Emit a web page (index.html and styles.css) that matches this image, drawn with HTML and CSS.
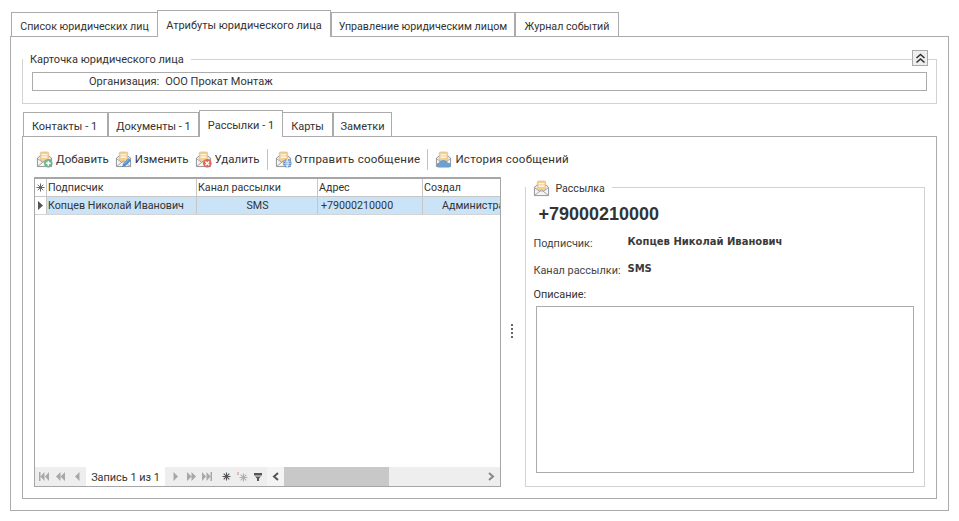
FILE: index.html
```html
<!DOCTYPE html>
<html lang="ru">
<head>
<meta charset="utf-8">
<title>Атрибуты юридического лица</title>
<link rel="stylesheet" href="styles.css">
</head>
<body>
<svg class="defs" width="0" height="0" aria-hidden="true">
  <defs>
    <symbol id="env" viewBox="0 0 18 18">
      <path d="M1.5 7.5 L9 2 L16.5 7.5 V16.5 H1.5 Z" fill="#f4f4f4" stroke="#8f8f8f"/>
      <path d="M4.5 9.5 V2.5 Q4.5 1 6 1 H12 Q13.5 1 13.5 2.5 V9.5 L9 12.5 Z" fill="#f5cf8e" stroke="#d9b987" stroke-width=".6"/>
      <path d="M6 4 H12 M6 6.5 H12" stroke="#fff" stroke-width="1.2"/>
      <path d="M1.5 8 L7 12 M16.5 8 L11 12 M1.5 16.5 L9 10.5 L16.5 16.5" fill="none" stroke="#a0a0a0"/>
    </symbol>
  </defs>
</svg>
<div class="app">
  <div class="tabs">
    <div class="tab t1">Список юридических лиц</div>
    <div class="tab active t2">Атрибуты юридического лица</div>
    <div class="tab t3">Управление юридическим лицом</div>
    <div class="tab t4">Журнал событий</div>
  </div>
  <div class="panel main">
    <div class="group card">
      <div class="legend">Карточка юридического лица</div>
      <button class="collapse" aria-label="Свернуть">
        <svg width="11" height="11" viewBox="0 0 11 11"><path d="M1.5 5 L5.5 1.5 L9.5 5 M1.5 9.5 L5.5 6 L9.5 9.5" fill="none" stroke="#333" stroke-width="1.6"/></svg>
      </button>
      <div class="field"><span class="field-label">Организация:</span><span>ООО Прокат Монтаж</span></div>
    </div>
    <div class="tabs inner">
      <div class="tab i1">Контакты - 1</div>
      <div class="tab i2">Документы - 1</div>
      <div class="tab active i3">Рассылки - 1</div>
      <div class="tab i4">Карты</div>
      <div class="tab i5">Заметки</div>
    </div>
    <div class="panel sub">
      <div class="toolbar">
        <div class="tool">
          <svg class="ico" viewBox="0 0 18 18"><use href="#env"/><circle cx="13" cy="13" r="4.5" fill="#6fb592"/><path d="M13 10.5 V15.5 M10.5 13 H15.5" stroke="#fff" stroke-width="1.6"/></svg>
          <span>Добавить</span>
        </div>
        <div class="tool">
          <svg class="ico" viewBox="0 0 18 18"><use href="#env"/><path d="M7.5 17 L8.5 13.5 L14.5 7.5 L17 10 L11 16 Z" fill="#4f8fd0"/><path d="M9.5 14 L14.8 8.7" stroke="#a9cdef" stroke-width=".7"/></svg>
          <span>Изменить</span>
        </div>
        <div class="tool">
          <svg class="ico" viewBox="0 0 18 18"><use href="#env"/><circle cx="13" cy="13" r="4.5" fill="#e0645c"/><path d="M11 11 L15 15 M15 11 L11 15" stroke="#fff" stroke-width="1.5"/></svg>
          <span>Удалить</span>
        </div>
        <div class="sep"></div>
        <div class="tool wide">
          <svg class="ico" viewBox="0 0 18 18"><use href="#env"/><circle cx="13" cy="13" r="4.5" fill="#5b8fcb"/><path d="M8.5 13 H17.5 M13 8.5 V17.5 M9.5 10.8 H16.5 M9.5 15.2 H16.5 M13 8.5 Q10 13 13 17.5 M13 8.5 Q16 13 13 17.5" fill="none" stroke="#fff" stroke-width=".6"/></svg>
          <span>Отправить сообщение</span>
        </div>
        <div class="sep"></div>
        <div class="tool wide">
          <svg class="ico" viewBox="0 0 18 18"><use href="#env"/><path d="M4 17.5 Q1.5 17.5 1.5 15 Q1.5 12.8 4 12.5 Q5 9.5 9 9.5 Q12.5 9.5 13.5 12.5 Q17 12.5 17 15 Q17 17.5 14.5 17.5 Z" fill="#6f9fd0"/></svg>
          <span>История сообщений</span>
        </div>
      </div>
      <div class="content">
        <div class="gridbox">
          <div class="row head">
            <div class="cell mark"><svg width="9" height="9" viewBox="0 0 9 9"><path d="M4.5 .5 V8.5 M.5 4.5 H8.5 M1.7 1.7 L7.3 7.3 M7.3 1.7 L1.7 7.3" stroke="#666"/></svg></div>
            <div class="cell c1">Подписчик</div>
            <div class="cell c2">Канал рассылки</div>
            <div class="cell c3">Адрес</div>
            <div class="cell c4">Создал</div>
          </div>
          <div class="row sel">
            <div class="cell mark"><svg width="5" height="9" viewBox="0 0 5 9"><path d="M0 0 L5 4.5 L0 9 Z" fill="#555"/></svg></div>
            <div class="cell c1">Копцев Николай Иванович</div>
            <div class="cell c2 center">SMS</div>
            <div class="cell c3 phone-cell">+79000210000</div>
            <div class="cell c4 ind">Администратор</div>
          </div>
          <div class="grid-body"></div>
          <div class="nav">
            <div class="navbtn"><svg width="10" height="9" viewBox="0 0 10 9"><path d="M0 0 H1.5 V9 H0 Z M5.5 0 V9 L1.5 4.5 Z M10 0 V9 L6 4.5 Z" fill="#a8a8a8"/></svg></div>
            <div class="navbtn"><svg width="9" height="9" viewBox="0 0 9 9"><path d="M4.5 0 V9 L0 4.5 Z M9 0 V9 L4.5 4.5 Z" fill="#a8a8a8"/></svg></div>
            <div class="navbtn"><svg width="5" height="9" viewBox="0 0 5 9"><path d="M4.5 0 V9 L0 4.5 Z" fill="#a8a8a8"/></svg></div>
            <div class="rec">Запись 1 из 1</div>
            <div class="navright">
              <div class="navbtn n"><svg width="5" height="9" viewBox="0 0 5 9"><path d="M.5 0 V9 L5 4.5 Z" fill="#a8a8a8"/></svg></div>
              <div class="navbtn n"><svg width="9" height="9" viewBox="0 0 9 9"><path d="M0 0 V9 L4.5 4.5 Z M4.5 0 V9 L9 4.5 Z" fill="#a8a8a8"/></svg></div>
              <div class="navbtn n"><svg width="10" height="9" viewBox="0 0 10 9"><path d="M0 0 V9 L4 4.5 Z M4.5 0 V9 L8.5 4.5 Z M8.5 0 H10 V9 H8.5 Z" fill="#a8a8a8"/></svg></div>
              <div class="navbtn n gap"><svg width="9" height="9" viewBox="0 0 9 9"><path d="M4.5 .5 V8.5 M.5 4.5 H8.5 M1.7 1.7 L7.3 7.3 M7.3 1.7 L1.7 7.3" stroke="#555" stroke-width="1.1"/></svg></div>
              <div class="navbtn n"><svg width="11" height="10" viewBox="0 0 11 10"><path d="M6.5 1.5 V9.5 M2.5 5.5 H10.5 M3.7 2.7 L9.3 8.3 M9.3 2.7 L3.7 8.3" stroke="#b0b0b0" stroke-width="1.1"/><path d="M1 0 V3" stroke="#d99a8e" stroke-width="1.2"/></svg></div>
              <div class="navbtn n"><svg width="8" height="8" viewBox="0 0 8 8"><path d="M0 0 H8 V2.5 H0 Z M1 3.5 H7 L5 5.5 V8 H3 V5.5 Z" fill="#555"/></svg></div>
            </div>
            <div class="sb-btn"><svg width="8" height="9" viewBox="0 0 8 9"><path d="M6 1 L2 4.5 L6 8" fill="none" stroke="#555" stroke-width="2"/></svg></div>
            <div class="sb-thumb"></div>
            <div class="sb-track"><svg width="8" height="9" viewBox="0 0 8 9"><path d="M2 1 L6 4.5 L2 8" fill="none" stroke="#888" stroke-width="2"/></svg></div>
          </div>
        </div>
        <div class="splitter"><i></i><i></i><i></i><i></i></div>
        <div class="group detail">
          <div class="legend with-icon">
            <svg class="ico" viewBox="0 0 18 18"><use href="#env"/></svg>
            <span>Рассылка</span>
          </div>
          <div class="phone">+79000210000</div>
          <div class="kv k1"><span class="key">Подписчик:</span><b>Копцев Николай Иванович</b></div>
          <div class="kv k2"><span class="key">Канал рассылки:</span><b>SMS</b></div>
          <div class="desc-label">Описание:</div>
          <div class="textarea"></div>
        </div>
      </div>
    </div>
  </div>
</div>
</body>
</html>
```

FILE: styles.css
```css
* { box-sizing: border-box; }
html, body { margin: 0; height: 100%; background: #fff; }
body {
  font-family: Roboto, "Noto Sans", sans-serif;
  font-size: 10.9px;
  color: #333;
  overflow: hidden;
}
.defs { position: absolute; }
.app { padding: 10px 0 0 10px; width: 949px; }

.tabs { display: flex; align-items: flex-end; height: 26px; padding-left: 1px; }
.tab {
  height: 24px;
  border: 1px solid #ababab;
  border-bottom: 0;
  background: #fff;
  display: flex;
  align-items: center;
  justify-content: center;
  white-space: nowrap;
  padding-top: 4px;
  font-size: 10.7px;
}
.tab.active { height: 27px; margin-bottom: -1px; position: relative; z-index: 1; padding-top: 3px; }
.t1 { width: 147px; }
.tab.t2 { width: 174px; margin-left: -1px; font-size: 11px; }
.t3 { width: 184px; }
.t4 { width: 104px; }

.panel { border: 1px solid #ababab; background: #fff; }
.main { height: 475px; padding: 22px 11px 11px; }

.group { border: 1px solid #d2d2d2; position: relative; }
.legend {
  width: fit-content;
  background: #fff;
  padding: 0 7px;
  margin: -8px 0 0 0;
  height: 15px;
  line-height: 15px;
  font-size: 11px;
}
.card { height: 45px; margin-bottom: 6px; }
.collapse {
  position: absolute;
  top: -10px;
  right: 8px;
  width: 16px;
  height: 16px;
  padding: 1px 0 0;
  border: 1px solid #ababab;
  background: #eee;
  display: flex;
  align-items: center;
  justify-content: center;
}
.field {
  margin: 5px 9px 0;
  height: 19px;
  border: 1px solid #ababab;
  display: flex;
  align-items: center;
  padding-left: 56px;
  font-size: 11px;
}
.field-label { margin-right: 6px; }

.inner { padding-left: 1px; }
.inner .tab { height: 24px; font-size: 11px; }
.inner .tab.active { height: 27px; }
.inner .i1 { width: 85px; padding-right: 2px; }
.i2 { width: 91px; }
.i3 { width: 84px; }
.i4 { width: 51px; margin-left: -1px; }
.i5 { width: 59px; }

.sub { height: 363px; padding: 11px 11px 0; }
.toolbar { display: flex; align-items: center; height: 22px; gap: 6px; padding-left: 2px; margin-bottom: 7px; }
.tool { display: flex; align-items: center; gap: 3px; white-space: nowrap; font-size: 11.5px; }
.tool.wide { letter-spacing: .25px; }
.ico { width: 17px; height: 17px; flex: none; display: block; }
.sep { width: 1px; height: 21px; margin: 0 1px; background: #c4c4c4; }

.content { display: flex; }
.gridbox {
  width: 468px;
  height: 310px;
  border: 1px solid #a6a6a6;
  border-top-width: 2px;
  display: flex;
  flex-direction: column;
  overflow: hidden;
}
.row { display: flex; flex: none; }
.head { height: 18px; border-bottom: 1px solid #c6c6c6; }
.sel { height: 18px; border-bottom: 1px solid #d4d4d4; }
.sel .cell { background: #cbe3f6; }
.cell {
  border-right: 1px solid #c6c6c6;
  padding-left: 1px;
  line-height: 17px;
  white-space: nowrap;
  overflow: hidden;
  flex: none;
  font-size: 10.7px;
}
.mark { width: 12px; padding: 0; display: flex; align-items: center; justify-content: center; background: #fff !important; }
.c1 { width: 150px; }
.c2 { width: 121px; }
.c3 { width: 105px; }
.c4 { width: 78px; border-right: 0; }
.center { text-align: center; }
.phone-cell { padding-left: 3px; }
.ind { padding-left: 19px; }
.grid-body { flex: 1; }

.nav { height: 19px; display: flex; align-items: center; background: #eee; flex: none; }
.navbtn { width: 17px; height: 19px; display: flex; align-items: center; justify-content: center; flex: none; }
.rec { width: 79px; height: 19px; background: #fff; line-height: 19px; padding-top: 1px; text-align: center; flex: none; }
.navright { display: flex; padding-left: 2px; width: 102px; flex: none; }
.navbtn.n { width: 16px; }
.navbtn.gap { margin-left: 3px; }
.sb-btn { width: 17px; height: 19px; background: #f4f4f4; display: flex; align-items: center; justify-content: center; flex: none; }
.sb-thumb { width: 105px; height: 19px; background: #c8c8c8; flex: none; }
.sb-track { flex: 1; height: 19px; display: flex; align-items: center; justify-content: flex-end; padding-right: 5px; }

.splitter { width: 24px; display: flex; flex-direction: column; align-items: center; justify-content: center; gap: 2px; height: 310px; padding: 0 2px 2px 0; }
.splitter i { width: 2px; height: 2px; background: #666; display: block; }

.detail { width: 400px; height: 300px; margin-top: 10px; }
.with-icon { display: flex; align-items: center; gap: 5px; margin: -8px 0 0 0; height: 17px; font-size: 10.6px; }
.phone { font-family: "Liberation Sans", sans-serif; font-weight: 700; font-size: 18px; line-height: 20px; margin: 7px 0 0 12px; color: #333; }
.kv { display: flex; margin-left: 7px; align-items: flex-start; }
.key { width: 94px; margin-top: 2px; line-height: 14px; color: #444; }
.kv b { font-family: "DejaVu Sans", sans-serif; font-size: 10px; line-height: 14px; color: #3a3a3a; }
.k1 { margin-top: 11px; height: 27px; }
.k2 { height: 25px; }
.desc-label { margin: 0 0 0 7px; line-height: 16px; }
.textarea { width: 378px; height: 167px; margin: 3px 0 0 10px; border: 1px solid #ababab; }
```
